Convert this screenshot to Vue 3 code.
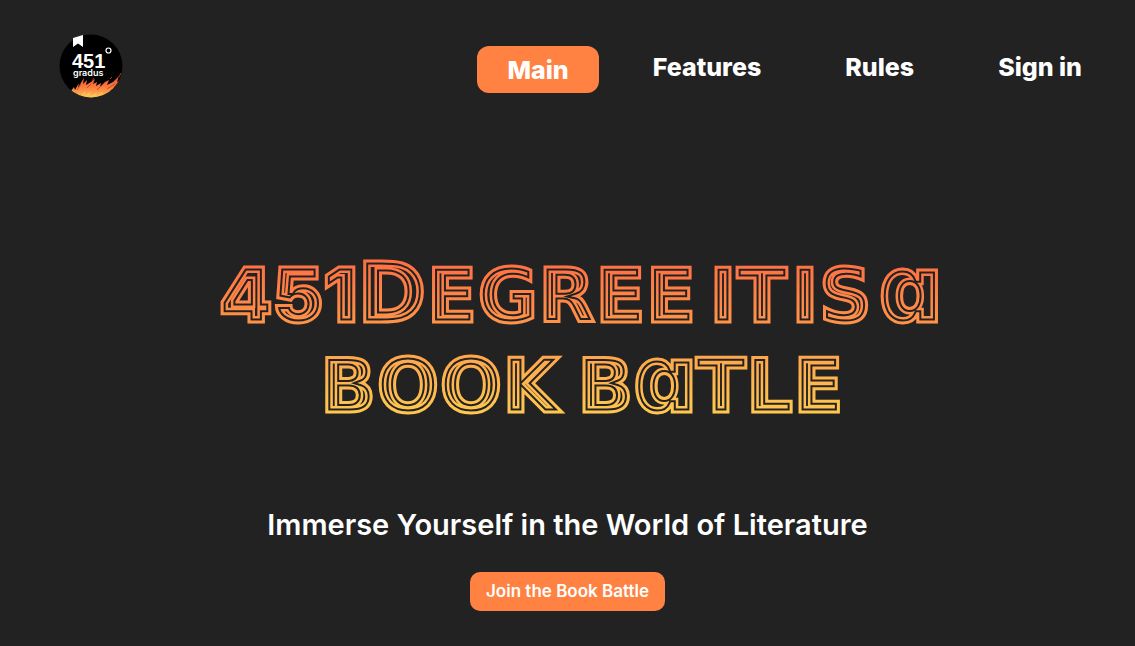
<script setup>
const links = ['Features', 'Rules', 'Sign in']
const bands = ['line-inner', 'gap-outer', 'line-outer']
</script>

<template>
  <div class="page">
    <header class="header">
      <a class="logo" href="#" aria-label="451 gradus">
        <svg viewBox="0 0 64 64" aria-hidden="true">
          <defs>
            <linearGradient id="fire" x1="0" y1="0" x2="0" y2="1">
              <stop offset="0" stop-color="#e94f2c" />
              <stop offset="0.5" stop-color="#fb7a40" />
              <stop offset="1" stop-color="#ffc44f" />
            </linearGradient>
            <clipPath id="disc"><circle cx="32" cy="32" r="31.5" /></clipPath>
          </defs>
          <circle cx="32" cy="32" r="31.5" fill="#000" />
          <path d="M14 4 L24 1 V13 L19 9.5 L14 13 Z" fill="#fff" />
          <text class="logo-num" x="13" y="34">451</text>
          <circle cx="49.5" cy="16.5" r="2.5" fill="none" stroke="#fff" stroke-width="1.2" />
          <text class="logo-word" x="14" y="42">gradus</text>
          <g clip-path="url(#disc)">
            <path fill="url(#fire)" d="M8 60 L10 55 L12 57 L15 53 L16 56 L20 49 L19 54 L23 47 L25 44 L24 50 L28 46 L27 51 L32 48 L36 45 L34 50 L38 48 L37 52 L42 49 L41 53 L46 48 L50 46 L48 51 L54 48 L60 42 L58 48 L63 45 L62 52 L50 64 H14 Z" />
            <path fill="#ffd060" opacity="0.5" d="M18 64 L21 59 L21 62 L27 56 L26 61 L32 57 L31 62 L38 58 L37 62 L44 57 L43 61 L52 56 L46 64 Z" />
            <path fill="none" stroke="#c93e28" stroke-width="0.9" d="M18 56 L22 50 M28 54 L32 50 M38 56 L42 52 M48 55 L56 50 M33 47 L35 44 M51 45 L53 43 M60 43 L62 39" />
          </g>
        </svg>
      </a>
      <nav class="nav">
        <a class="link active" href="#">Main</a>
        <a v-for="link in links" :key="link" class="link" href="#">{{ link }}</a>
      </nav>
    </header>

    <main class="hero">
      <h1 class="title">
        <svg viewBox="0 0 760 216">
          <defs>
            <linearGradient id="heat" gradientUnits="userSpaceOnUse" x1="0" y1="32" x2="0" y2="184">
              <stop offset="0" stop-color="#ff7043" />
              <stop offset="1" stop-color="#ffc850" />
            </linearGradient>
            <clipPath id="letters"><use href="#headline" /></clipPath>
          </defs>
          <g class="base">
            <text id="headline" class="headline">
              <tspan class="digits" x="32" y="92">451</tspan>
              <tspan class="large" x="170" y="92">D</tspan><tspan>EGREE</tspan>
              <tspan x="522" y="92">IT</tspan>
              <tspan x="604" y="92">IS</tspan>
              <tspan class="round" x="692" y="92">a</tspan>
              <tspan x="133" y="182">BOOK</tspan>
              <tspan x="390" y="182">B</tspan><tspan class="round">a</tspan><tspan>TLE</tspan>
            </text>
          </g>
          <g clip-path="url(#letters)" aria-hidden="true">
            <use v-for="band in bands" :key="band" href="#headline" :class="band" />
          </g>
        </svg>
      </h1>
      <p class="tagline">Immerse Yourself in the World of Literature</p>
      <button class="join" type="button">Join the Book Battle</button>
    </main>
  </div>
</template>

<style>
body {
  margin: 0;
  background: #222;
}
</style>

<style scoped>
.page {
  min-height: 100vh;
  box-sizing: border-box;
  background: #222;
  color: #fff;
  font-family: Inter, "Liberation Sans", sans-serif;
}
.header {
  display: flex;
  justify-content: space-between;
  align-items: flex-start;
  padding: 34px 23px 0 59px;
}
.logo,
.logo svg {
  display: block;
  width: 64px;
  height: 64px;
}
.logo-num {
  fill: #fff;
  font-family: "Liberation Sans", sans-serif;
  font-size: 20px;
  font-weight: 700;
}
.logo-word {
  fill: #fff;
  font-size: 9px;
  font-weight: 600;
}
.nav {
  display: flex;
  align-items: flex-start;
  gap: 24px;
  padding-top: 12px;
}
.link {
  padding: 6px 30px;
  color: #fff;
  font-size: 25px;
  font-weight: 800;
  line-height: 30px;
  text-decoration: none;
}
.active {
  padding-top: 9px;
  padding-bottom: 8px;
  border-radius: 12px;
  background: #ff8243;
}
.hero {
  display: flex;
  flex-direction: column;
  align-items: center;
  padding-top: 132px;
}
.title {
  width: 67%;
  margin: 0;
}
.title svg {
  display: block;
  width: 100%;
}
.headline {
  font-family: "DejaVu Sans", sans-serif;
  font-size: 74px;
  font-weight: 700;
}
.large {
  font-size: 84px;
}
.digits {
  font-family: Inter, sans-serif;
  font-size: 76px;
  font-weight: 900;
}
.round {
  font-family: Inter, sans-serif;
  font-size: 96px;
  font-weight: 900;
  font-feature-settings: "cv11";
}
.base {
  fill: #222;
  stroke: url(#heat);
  stroke-width: 3px;
}
.line-inner {
  fill: none;
  stroke: url(#heat);
  stroke-width: 12px;
}
.gap-outer {
  fill: none;
  stroke: #222;
  stroke-width: 7px;
}
.line-outer {
  fill: none;
  stroke: url(#heat);
  stroke-width: 3px;
}
.tagline {
  margin: 62px 0 0;
  font-size: 29px;
  font-weight: 600;
  line-height: 34px;
}
.join {
  margin-top: 30px;
  padding: 9px 16px;
  border: 0;
  border-radius: 10px;
  background: #ff8243;
  color: #fff;
  font: 600 17px/21px Inter, "Liberation Sans", sans-serif;
}
</style>
